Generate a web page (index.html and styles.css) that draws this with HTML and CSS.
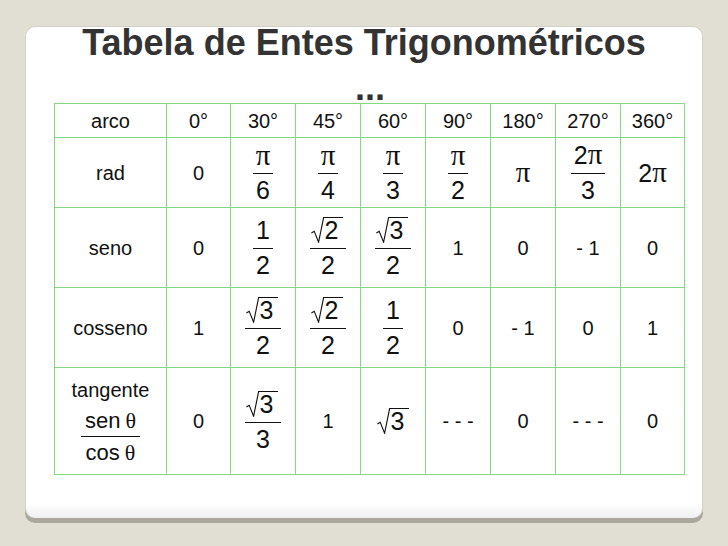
FILE: index.html
```html
<!DOCTYPE html>
<html lang="pt">
<head>
<meta charset="utf-8">
<title>Tabela de Entes Trigonométricos</title>
<link rel="stylesheet" href="styles.css">
</head>
<body>
<div class="card">
  <h1 class="title">Tabela de Entes Trigonométricos<br><span class="dots">...</span></h1>
  <div class="grid">
    <!-- header -->
    <div class="cell hd">arco</div>
    <div class="cell hd">0°</div>
    <div class="cell hd">30°</div>
    <div class="cell hd">45°</div>
    <div class="cell hd">60°</div>
    <div class="cell hd">90°</div>
    <div class="cell hd">180°</div>
    <div class="cell hd">270°</div>
    <div class="cell hd">360°</div>
    <!-- rad -->
    <div class="cell r-rad">rad</div>
    <div class="cell r-rad">0</div>
    <div class="cell r-rad"><span class="frac"><span class="num"><span class="pi">π</span></span><span class="den">6</span></span></div>
    <div class="cell r-rad"><span class="frac"><span class="num"><span class="pi">π</span></span><span class="den">4</span></span></div>
    <div class="cell r-rad"><span class="frac"><span class="num"><span class="pi">π</span></span><span class="den">3</span></span></div>
    <div class="cell r-rad"><span class="frac"><span class="num"><span class="pi">π</span></span><span class="den">2</span></span></div>
    <div class="cell r-rad"><span class="big"><span class="pi">π</span></span></div>
    <div class="cell r-rad"><span class="frac"><span class="num">2<span class="pi">π</span></span><span class="den">3</span></span></div>
    <div class="cell r-rad"><span class="big">2<span class="pi">π</span></span></div>
    <!-- seno -->
    <div class="cell r-mid">seno</div>
    <div class="cell r-mid">0</div>
    <div class="cell r-mid"><span class="frac"><span class="num">1</span><span class="den">2</span></span></div>
    <div class="cell r-mid"><span class="frac"><span class="num"><span class="sqrt"><svg class="rad" viewBox="0 0 13 26" width="13" height="26"><path d="M0.4 16 L3.2 14.2 L7.6 25.2 L12.6 0.6 L13 0.6"/></svg><span class="rc">2</span></span></span><span class="den">2</span></span></div>
    <div class="cell r-mid"><span class="frac"><span class="num"><span class="sqrt"><svg class="rad" viewBox="0 0 13 26" width="13" height="26"><path d="M0.4 16 L3.2 14.2 L7.6 25.2 L12.6 0.6 L13 0.6"/></svg><span class="rc">3</span></span></span><span class="den">2</span></span></div>
    <div class="cell r-mid">1</div>
    <div class="cell r-mid">0</div>
    <div class="cell r-mid">- 1</div>
    <div class="cell r-mid">0</div>
    <!-- cosseno -->
    <div class="cell r-mid">cosseno</div>
    <div class="cell r-mid">1</div>
    <div class="cell r-mid"><span class="frac"><span class="num"><span class="sqrt"><svg class="rad" viewBox="0 0 13 26" width="13" height="26"><path d="M0.4 16 L3.2 14.2 L7.6 25.2 L12.6 0.6 L13 0.6"/></svg><span class="rc">3</span></span></span><span class="den">2</span></span></div>
    <div class="cell r-mid"><span class="frac"><span class="num"><span class="sqrt"><svg class="rad" viewBox="0 0 13 26" width="13" height="26"><path d="M0.4 16 L3.2 14.2 L7.6 25.2 L12.6 0.6 L13 0.6"/></svg><span class="rc">2</span></span></span><span class="den">2</span></span></div>
    <div class="cell r-mid"><span class="frac"><span class="num">1</span><span class="den">2</span></span></div>
    <div class="cell r-mid">0</div>
    <div class="cell r-mid">- 1</div>
    <div class="cell r-mid">0</div>
    <div class="cell r-mid">1</div>
    <!-- tangente -->
    <div class="cell r-tan">
      <div class="tanlabel">
        <span class="tname">tangente</span>
        <span class="frac small"><span class="num">sen<span class="th">θ</span></span><span class="den">cos<span class="th">θ</span></span></span>
      </div>
    </div>
    <div class="cell r-tan">0</div>
    <div class="cell r-tan"><span class="frac"><span class="num"><span class="sqrt"><svg class="rad" viewBox="0 0 13 26" width="13" height="26"><path d="M0.4 16 L3.2 14.2 L7.6 25.2 L12.6 0.6 L13 0.6"/></svg><span class="rc">3</span></span></span><span class="den">3</span></span></div>
    <div class="cell r-tan">1</div>
    <div class="cell r-tan"><span class="sqrt solo"><svg class="rad" viewBox="0 0 13 26" width="13" height="26"><path d="M0.4 16 L3.2 14.2 L7.6 25.2 L12.6 0.6 L13 0.6"/></svg><span class="rc">3</span></span></div>
    <div class="cell r-tan">- - -</div>
    <div class="cell r-tan">0</div>
    <div class="cell r-tan">- - -</div>
    <div class="cell r-tan">0</div>
  </div>
</div>
</body>
</html>
```

FILE: styles.css
```css
html, body {
  margin: 0;
  padding: 0;
}

body {
  background: #e1ded4;
  width: 728px;
  height: 546px;
  overflow: hidden;
  font-family: "Liberation Sans", Arial, sans-serif;
}

.card {
  box-sizing: border-box;
  margin: 26px 0 0 25px;
  width: 678px;
  height: 492px;
  padding: 0 0 0 28px;
  border: 1px solid #d3d0c7;
  border-bottom: none;
  border-radius: 10px;
  background: linear-gradient(to bottom, #ffffff 0, #ffffff 97%, #efefef 100%);
  box-shadow: 0 5px 0 0 #aaa79e;
}

.title {
  margin: -7px 0 0 -28px;
  height: 83px;
  font-family: "Liberation Sans", Arial, sans-serif;
  font-weight: bold;
  font-size: 36px;
  line-height: 45px;
  color: #333333;
  text-align: center;
}

.dots {
  padding-left: 12px;
}

.grid {
  display: grid;
  grid-template-columns: 112px 64px 65px 65px 65px 65px 65px 65px 64px;
  grid-template-rows: 34px 70px 80px 80px 107px;
  width: 630px;
  border-top: 1px solid #84d884;
  border-left: 1px solid #84d884;
  background: #ffffff;
  color: #111111;
}

.cell {
  box-sizing: border-box;
  display: flex;
  align-items: center;
  justify-content: center;
  border-right: 1px solid #84d884;
  border-bottom: 1px solid #84d884;
  font-size: 20px;
  line-height: 22px;
  white-space: pre;
}

.hd {
  padding-top: 1px;
}

.pi, .th {
  font-family: "Liberation Serif", "Times New Roman", serif;
}

.pi {
  font-size: 29px;
}

.big {
  font-size: 25px;
  line-height: 25px;
}

.frac {
  display: inline-flex;
  flex-direction: column;
  align-items: stretch;
  font-size: 25px;
  line-height: 25px;
  text-align: center;
}

.num {
  display: flex;
  justify-content: center;
  align-items: baseline;
  padding: 0 3px 5px;
}

.den {
  display: block;
  padding: 4px 3px 0;
  border-top: 1px solid #111111;
}

.sqrt {
  display: inline-flex;
  align-items: flex-start;
}

.num .sqrt {
  margin-left: -2px;
}

.sqrt .rad {
  display: block;
  fill: none;
  stroke: #111111;
  stroke-width: 1.1;
}

.rc {
  display: block;
  border-top: 1.2px solid #111111;
  line-height: 24px;
  padding: 0 5px 0 1px;
}

.solo {
  font-size: 25px;
}

.tanlabel {
  display: flex;
  flex-direction: column;
  align-items: center;
  padding-top: 0;
}

.tname {
  line-height: 22px;
  margin-bottom: 9px;
}

.frac.small {
  font-size: 22px;
  line-height: 22px;
}

.frac.small .num {
  padding: 0 4px 4px;
}

.frac.small .den {
  padding: 5px 4px 0;
}

.th {
  margin-left: 5px;
}
```
